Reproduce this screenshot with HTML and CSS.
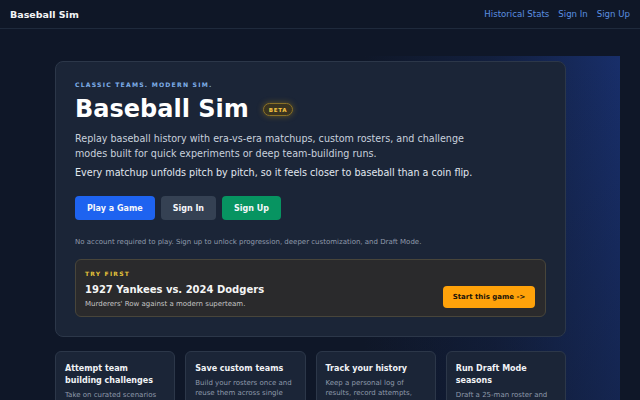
FILE: index.html
```html
<!DOCTYPE html>
<html lang="en">
<head>
<meta charset="utf-8">
<title>Baseball Sim</title>
<link rel="stylesheet" href="styles.css">
</head>
<body>
<header class="topbar">
  <a class="brand" href="#">Baseball Sim</a>
  <nav class="nav">
    <a href="#">Historical Stats</a>
    <a href="#">Sign In</a>
    <a href="#">Sign Up</a>
  </nav>
</header>
<main class="stage">
  <section class="hero">
    <p class="eyebrow">CLASSIC TEAMS. MODERN SIM.</p>
    <div class="title-row">
      <h1 class="title">Baseball Sim</h1>
      <span class="badge">BETA</span>
    </div>
    <p class="lead">Replay baseball history with era-vs-era matchups, custom rosters, and challenge modes built for quick experiments or deep team-building runs.</p>
    <p class="lead strong">Every matchup unfolds pitch by pitch, so it feels closer to baseball than a coin flip.</p>
    <div class="actions">
      <a class="btn btn-blue" href="#">Play a Game</a>
      <a class="btn btn-grey" href="#">Sign In</a>
      <a class="btn btn-green" href="#">Sign Up</a>
    </div>
    <p class="note">No account required to play. Sign up to unlock progression, deeper customization, and Draft Mode.</p>
    <div class="try">
      <div class="try-text">
        <p class="try-label">TRY FIRST</p>
        <p class="try-title">1927 Yankees vs. 2024 Dodgers</p>
        <p class="try-sub">Murderers' Row against a modern superteam.</p>
      </div>
      <a class="btn btn-orange" href="#">Start this game -&gt;</a>
    </div>
  </section>
  <section class="features">
    <div class="feature">
      <h3>Attempt team building challenges</h3>
      <p>Take on curated scenarios with roster limits and goals.</p>
    </div>
    <div class="feature">
      <h3>Save custom teams</h3>
      <p>Build your rosters once and reuse them across single games.</p>
    </div>
    <div class="feature">
      <h3>Track your history</h3>
      <p>Keep a personal log of results, record attempts, and challenges.</p>
    </div>
    <div class="feature">
      <h3>Run Draft Mode seasons</h3>
      <p>Draft a 25-man roster and play a full season.</p>
    </div>
  </section>
</main>
</body>
</html>
```
FILE: styles.css
```css
* { box-sizing: border-box; }
html, body { margin: 0; padding: 0; }
body {
  background: #0f1728;
  font-family: "DejaVu Sans", Verdana, sans-serif;
  color: #e5e7eb;
  height: 400px;
  overflow: hidden;
}
a { text-decoration: none; }
p { margin: 0; }

.topbar {
  height: 29px;
  display: flex;
  align-items: center;
  justify-content: space-between;
  padding: 0 10px;
  background: #0f1727;
  border-bottom: 1px solid #1f2a3c;
}
.brand {
  color: #f3f4f6;
  font-weight: 700;
  font-size: 9.5px;
}
.nav { display: flex; gap: 9px; }
.nav a {
  color: #5b8fe0;
  font-size: 8.6px;
}

.stage {
  position: relative;
  padding: 32px 75px 0 55px;
}
.stage::before {
  content: "";
  position: absolute;
  top: 27px;
  right: 20px;
  width: 320px;
  height: 400px;
  background:
    linear-gradient(to bottom, rgba(15, 23, 40, 0) 0%, rgba(15, 23, 40, 0.45) 100%),
    linear-gradient(to left, rgba(30, 62, 150, 0.6), rgba(30, 60, 140, 0.22) 40%, rgba(15, 23, 40, 0) 80%);
  z-index: 0;
}
.hero, .features { position: relative; z-index: 1; }

.hero {
  width: 511px;
  background: #1b2537;
  border: 1px solid #2c3749;
  border-radius: 8px;
  padding: 19px 19px 19px;
}
.eyebrow {
  color: #7eaee8;
  font-size: 6.1px;
  font-weight: 700;
  letter-spacing: 0.2em;
}
.title-row {
  display: flex;
  align-items: center;
  gap: 14px;
  margin-top: 4px;
}
.title {
  margin: 0;
  font-size: 24px;
  font-weight: 700;
  color: #ffffff;
  line-height: 34px;
}
.badge {
  font-size: 5.6px;
  font-weight: 700;
  letter-spacing: 0.12em;
  color: #f5c542;
  background: #3a3420;
  border: 1px solid #8a7126;
  border-radius: 8px;
  padding: 3px 5px 2px;
  box-shadow: 0 0 6px rgba(234, 179, 8, 0.35);
}
.lead {
  margin-top: 5px;
  max-width: 400px;
  font-size: 9.6px;
  line-height: 15px;
  color: #c9d1dd;
}
.lead.strong { color: #e2e8f0; margin-top: 4px; }

.actions {
  display: flex;
  gap: 6px;
  margin-top: 16px;
}
.btn {
  display: inline-flex;
  align-items: center;
  justify-content: center;
  white-space: nowrap;
  height: 24px;
  padding: 0 12px;
  border-radius: 4px;
  font-size: 8px;
  font-weight: 700;
  color: #f5f7fb;
}
.btn-blue { background: #1e63f0; }
.btn-grey { background: #354153; }
.btn-green { background: #079461; }

.note {
  margin-top: 18px;
  font-size: 7px;
  color: #8f9aab;
}

.try {
  margin-top: 13px;
  display: flex;
  align-items: flex-end;
  justify-content: space-between;
  background: #2a2a2c;
  border: 1px solid #48453a;
  border-radius: 6px;
  padding: 10px 10px 8px 9px;
}
.try-label {
  font-size: 6px;
  font-weight: 700;
  letter-spacing: 0.2em;
  color: #e5c23a;
}
.try-title {
  margin-top: 7px;
  font-size: 10px;
  font-weight: 700;
  color: #f5f5f5;
}
.try-sub {
  margin-top: 5px;
  font-size: 7px;
  color: #c4c4c4;
}
.btn-orange {
  background: #ffa20a;
  color: #1b1409;
  height: 22px;
  width: 92px;
  padding: 0;
  font-size: 7px;
  border-radius: 4px;
  margin-bottom: 0;
}

.features {
  width: 511px;
  margin-top: 14px;
  display: grid;
  grid-template-columns: repeat(4, 1fr);
  gap: 10px;
}
.feature {
  background: #1b2537;
  border: 1px solid #2c3749;
  border-radius: 6px;
  padding: 11px 9px 10px;
  height: 80px;
}
.feature h3 {
  margin: 0;
  font-size: 8px;
  line-height: 12px;
  font-weight: 700;
  color: #f1f3f6;
}
.feature p {
  margin-top: 3px;
  font-size: 7px;
  line-height: 10px;
  color: #8e99aa;
}
```
